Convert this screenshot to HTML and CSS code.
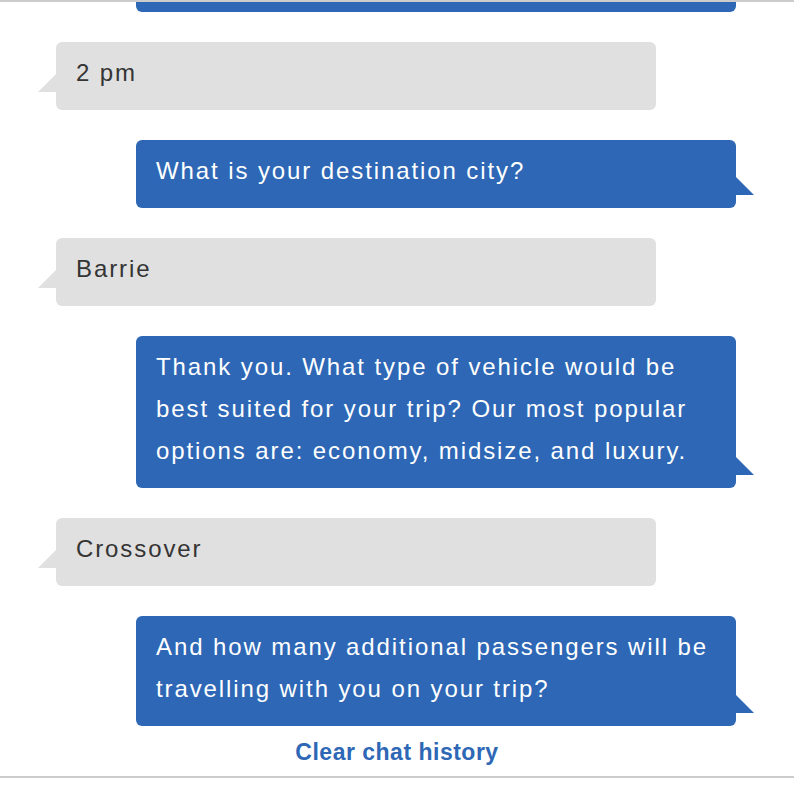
FILE: index.html
```html
<!DOCTYPE html>
<html lang="en">
<head>
<meta charset="utf-8">
<title>Chat</title>
<link rel="stylesheet" href="styles.css">
</head>
<body>
<div class="chat">
  <div class="log">
    <div class="msg bot">What time would you like to pick up the car?</div>
    <div class="msg user">2 pm</div>
    <div class="msg bot">What is your destination city?</div>
    <div class="msg user">Barrie</div>
    <div class="msg bot">Thank you. What type of vehicle would be best suited for your trip? Our most popular options are: economy, midsize, and luxury.</div>
    <div class="msg user">Crossover</div>
    <div class="msg bot">And how many additional passengers will be travelling with you on your trip?</div>
  </div>
  <div class="footer"><a class="clear" href="#">Clear chat history</a></div>
</div>
</body>
</html>
```
FILE: styles.css
```css
html, body {
  margin: 0;
  padding: 0;
  background: #ffffff;
}

body {
  font-family: "Liberation Sans", Arial, Helvetica, sans-serif;
}

.chat {
  height: 774px;
  display: flex;
  flex-direction: column;
  border-top: 2px solid #cccccc;
  border-bottom: 2px solid #cccccc;
}

.log {
  flex: 1;
  min-height: 0;
  overflow: hidden;
  display: flex;
  flex-direction: column;
  justify-content: flex-end;
  gap: 30px;
}

.msg {
  position: relative;
  flex-shrink: 0;
  box-sizing: border-box;
  width: 600px;
  padding: 10px 20px 16px;
  border-radius: 6px;
  font-size: 24px;
  line-height: 42px;
  letter-spacing: 1.9px;
}

.msg.user {
  align-self: flex-start;
  margin-left: 56px;
  background: #e0e0e0;
  color: #343434;
}

.msg.user::before {
  content: "";
  position: absolute;
  left: -18px;
  bottom: 18px;
  width: 0;
  height: 0;
  border-bottom: 18px solid #e0e0e0;
  border-left: 18px solid transparent;
}

.msg.bot {
  align-self: flex-end;
  margin-right: 58px;
  background: #2d67b5;
  color: #ffffff;
}

.msg.bot::after {
  content: "";
  position: absolute;
  right: -18px;
  bottom: 13px;
  width: 0;
  height: 0;
  border-bottom: 18px solid #2d67b5;
  border-right: 18px solid transparent;
}

.footer {
  flex-shrink: 0;
  height: 50px;
  box-sizing: border-box;
  padding: 13px 0 11px;
  text-align: center;
  font-size: 23px;
  line-height: 26px;
}

.clear {
  font-weight: bold;
  letter-spacing: 0.5px;
  color: #2d67b5;
  text-decoration: none;
}
```
